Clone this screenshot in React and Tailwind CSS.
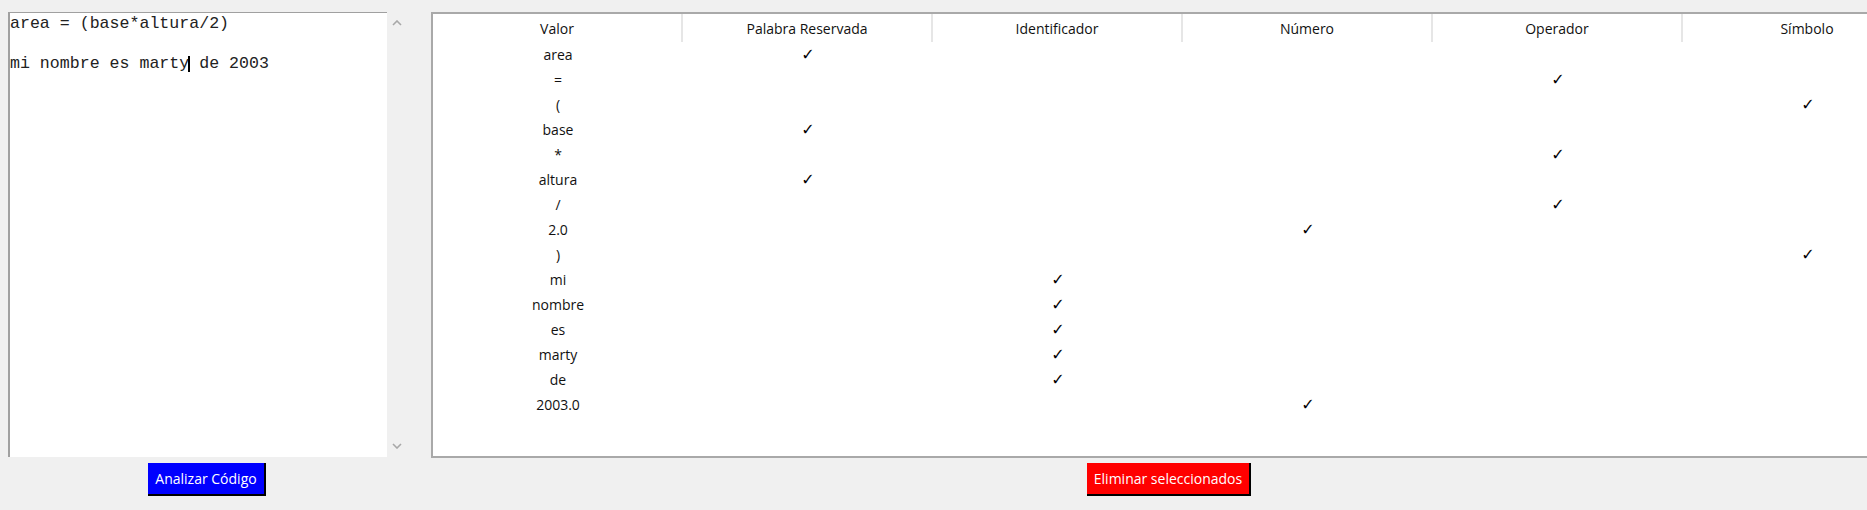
import React from "react";

const cols = ["Valor", "Palabra Reservada", "Identificador", "Número", "Operador", "Símbolo"];
const rows = [
  ["area", 1],
  ["=", 4],
  ["(", 5],
  ["base", 1],
  ["*", 4],
  ["altura", 1],
  ["/", 4],
  ["2.0", 3],
  [")", 5],
  ["mi", 2],
  ["nombre", 2],
  ["es", 2],
  ["marty", 2],
  ["de", 2],
  ["2003.0", 3],
];

const ui = { fontFamily: '"Open Sans", "Noto Sans", sans-serif' };

function Chevron({ up }) {
  return (
    <svg width="10" height="6" viewBox="0 0 10 6" className="block">
      <path d={up ? "M1 5 L5 1 L9 5" : "M1 1 L5 5 L9 1"} fill="none" stroke="#a8a8a8" strokeWidth="1.6" />
    </svg>
  );
}

export default function App() {
  return (
    <div className="w-[1867px] h-[510px] bg-[#f0f0f0] overflow-hidden flex pt-3 pl-2" style={ui}>
      <div className="flex flex-col w-[398px] shrink-0">
        <div className="flex h-[445px]">
          <div
            className="relative w-[379px] bg-white border-l-2 border-t border-[#a0a0a0] pt-[1px] text-[16.6px] leading-[20px] text-[#222] whitespace-pre"
            style={{ fontFamily: '"Liberation Mono", monospace' }}
          >
            <div>area = (base*altura/2)</div>
            <div>{" "}</div>
            <div className="relative">
              mi nombre es marty de 2003
              <span className="absolute left-[178px] top-[2px] w-[2px] h-[16px] bg-black" />
            </div>
          </div>
          <div className="w-[19px] flex flex-col justify-between items-center py-[8px]">
            <Chevron up />
            <Chevron />
          </div>
        </div>
        <div className="flex justify-center mt-[6px]">
          <button
            className="w-[118px] h-[33px] bg-[#0000ff] text-white text-[14px] border-r-2 border-b-2 border-black flex items-center justify-center"
            style={ui}
          >
            Analizar Código
          </button>
        </div>
      </div>

      <div className="flex flex-col w-[1476px] shrink-0 ml-[25px]">
        <div className="h-[446px] bg-white border-2 border-[#a9a9a9] overflow-hidden">
          <div className="flex h-[28px] items-center">
            {cols.map((c) => (
              <div
                key={c}
                className="w-[250px] shrink-0 h-[28px] flex items-center justify-center border-r-2 border-[#e6e6e6] text-[14px] text-[#111]"
              >
                {c}
              </div>
            ))}
          </div>
          {rows.map(([v, k], i) => (
            <div key={i} className="flex h-[25px] items-center">
              {cols.map((c, j) => (
                <div key={c} className="w-[250px] shrink-0 flex items-center justify-center text-[14px] text-[#111]">
                  {j === 0 ? (
                    v
                  ) : j === k ? (
                    <span className="text-[16px] text-black font-bold" style={{ fontFamily: '"DejaVu Sans", sans-serif' }}>
                      ✓
                    </span>
                  ) : (
                    ""
                  )}
                </div>
              ))}
            </div>
          ))}
        </div>
        <div className="flex justify-center mt-[5px]">
          <button
            className="w-[164px] h-[33px] bg-[#ff0000] text-white text-[14px] border-r-2 border-b-2 border-black flex items-center justify-center"
            style={ui}
          >
            Eliminar seleccionados
          </button>
        </div>
      </div>
    </div>
  );
}
